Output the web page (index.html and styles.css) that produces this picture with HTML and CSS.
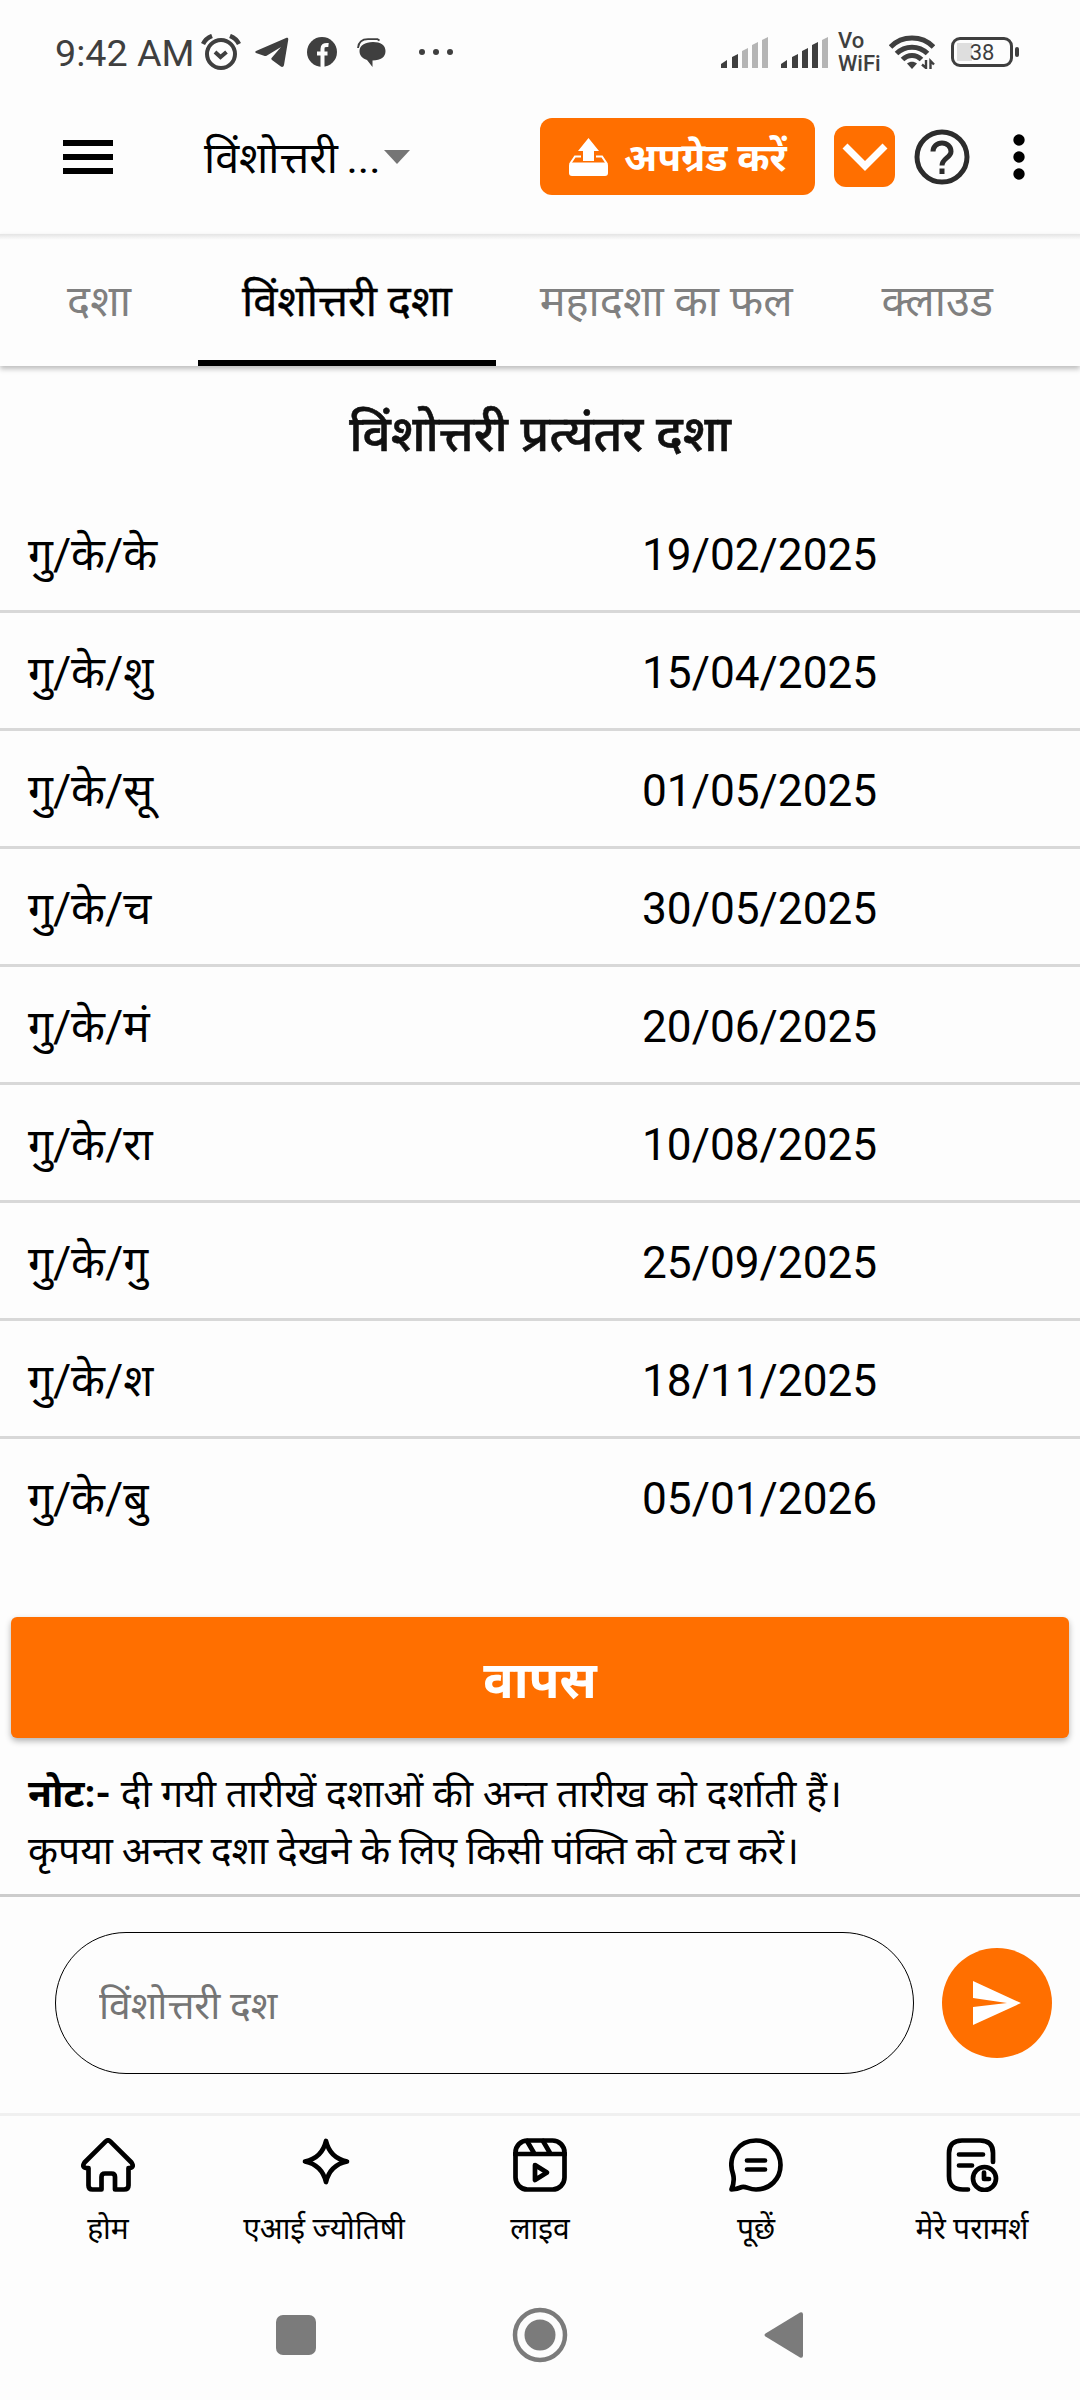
FILE: index.html
```
<!DOCTYPE html>
<html lang="hi">
<head>
    <meta charset="UTF-8">
    <meta name="viewport" content="width=device-width, initial-scale=1.0">
    <title>विंशोत्तरी दशा</title>
    <link rel="stylesheet" href="styles.css">
</head>
<body>
    <!-- Status bar -->
    <div class="status-bar">
        <span class="time">9:42 AM</span>
        <svg class="alarm" width="40" height="36" viewBox="0 0 40 36" fill="none" stroke="#3f3f3f" stroke-width="4">
            <circle cx="20" cy="20" r="14"/>
            <path d="M2 10C4 6 7 3.500 11 2M38 10C36 6 33 3.500 29 2" stroke-width="4.500"/>
            <path d="M14 18l5.500 5 6-5"/>
        </svg>
        <svg class="telegram" width="34" height="30" viewBox="0 0 34 30" fill="#3f3f3f">
            <path d="M1 14L31 1c1.500-.5 2.500 0 2.200 2L29 28c-.4 2-2 2.400-3.500 1.300L17 23c-1-.8-1-1.600 0-2.600L26 10 12 18.500c-1 .6-2 .7-3 .3L1 16c-1-.6-1-1.400 0-2z"/>
        </svg>
        <svg class="facebook" width="30" height="30" viewBox="0 0 30 30">
            <circle cx="15" cy="15" r="15" fill="#3f3f3f"/>
            <path d="M15.500 30V12c0-3 1.500-4.500 6-4M10 16.500h10.500" fill="none" stroke="#fdfdfd" stroke-width="4"/>
        </svg>
        <svg class="chat" width="29" height="29" viewBox="0 0 29 29" fill="#3f3f3f">
            <path d="M16 4C23.500 4 28.500 7 28.500 13S24 22.500 15.500 22.500V29L10 22C5 20.500 2.500 17 2.500 13C2.500 7.500 8 4 16 4z"/>
            <path d="M1 10C1.500 4.500 5 1.200 11 1.200h9.500l2 1.300" fill="none" stroke="#3f3f3f" stroke-width="1.800"/>
        </svg>
        <svg class="more" width="34" height="8" viewBox="0 0 34 8" fill="#3f3f3f">
            <circle cx="3" cy="4" r="3"/><circle cx="17" cy="4" r="3"/><circle cx="31" cy="4" r="3"/>
        </svg>
        <div class="status-right">
            <svg width="48" height="31" viewBox="0 0 48 31">
                <path d="M0 31v-4l6-4v8zM11 31V20l6-3v14z" fill="#3f3f3f"/>
                <path d="M21 31V14l6-3v20zM31 31V8l6-3v26zM41 31V3l6-3v31z" fill="#b5b5b5"/>
            </svg>
            <svg width="48" height="31" viewBox="0 0 48 31">
                <path d="M0 31v-4l6-4v8zM11 31V20l6-3v14zM21 31V14l6-3v20zM31 31V8l6-3v26z" fill="#3f3f3f"/>
                <path d="M41 31V3l6-3v31z" fill="#b5b5b5"/>
            </svg>
            <div class="vowifi"><span>Vo</span><span>WiFi</span></div>
            <svg class="wifi" width="46" height="34" viewBox="0 0 46 34" fill="none" stroke="#3f3f3f" stroke-width="5">
                <path d="M1.500 12C13 0 33 0 44.500 12M7.500 18.500C16 10 30 10 38.500 18.500M13.500 24.500C19 19 27 19 32.500 24.500"/>
                <path d="M23 34l-5-5.500c3-2.500 7-2.500 10 0z" fill="#3f3f3f" stroke="none"/>
                <path d="M37 25v8l-4-3.500M41.500 34v-8l3.500 3.500" stroke-width="2.400"/>
            </svg>
            <div class="battery"><span>38</span></div>
        </div>
    </div>

    <!-- App bar -->
    <div class="app-bar">
        <div class="hamburger"><i></i><i></i><i></i></div>
        <span class="app-title">विंशोत्तरी ...</span>
        <span class="caret"></span>
        <div class="app-actions">
            <div class="upgrade">
                <svg width="39" height="38" viewBox="0 0 39 38" fill="#fff">
                    <path d="M19.500 0L30 13h-5v10H14V13H9z"/>
                    <path d="M1 26L6 18.500h6M38 26l-5-7.500h-6" fill="none" stroke="#fff" stroke-width="2"/>
                    <rect x="0" y="24.500" width="39" height="13.500" rx="3"/>
                </svg>
                <span>अपग्रेड करें</span>
            </div>
            <div class="expand">
                <svg width="46" height="28" viewBox="0 0 46 28" fill="none" stroke="#fff" stroke-width="7">
                    <path d="M3 3L23 23 43 3"/>
                </svg>
            </div>
            <svg class="help" width="56" height="56" viewBox="0 0 56 56" fill="none" stroke="#2c2c2c" stroke-width="5">
                <circle cx="28" cy="28" r="25"/>
                <path d="M19 22.500c0-5 4-8.500 9-8.500s9 3.500 9 8.500c0 6-9 7-9 14"/>
                <path d="M28 39.500v5.500"/>
            </svg>
            <svg width="12" height="46" viewBox="0 0 12 46">
                <circle cx="6" cy="6" r="5.700"/><circle cx="6" cy="23" r="5.700"/><circle cx="6" cy="40" r="5.700"/>
            </svg>
        </div>
    </div>

    <!-- Tabs -->
    <div class="tabs">
        <div class="tab first">दशा</div>
        <div class="tab active">विंशोत्तरी दशा</div>
        <div class="tab">महादशा का फल</div>
        <div class="tab">क्लाउड</div>
    </div>

    <div class="content">
        <h1>विंशोत्तरी प्रत्यंतर दशा</h1>
        <div class="row"><span>गु/के/के</span><span>19/02/2025</span></div>
        <div class="row"><span>गु/के/शु</span><span>15/04/2025</span></div>
        <div class="row"><span>गु/के/सू</span><span>01/05/2025</span></div>
        <div class="row"><span>गु/के/च</span><span>30/05/2025</span></div>
        <div class="row"><span>गु/के/मं</span><span>20/06/2025</span></div>
        <div class="row"><span>गु/के/रा</span><span>10/08/2025</span></div>
        <div class="row"><span>गु/के/गु</span><span>25/09/2025</span></div>
        <div class="row"><span>गु/के/श</span><span>18/11/2025</span></div>
        <div class="row"><span>गु/के/बु</span><span>05/01/2026</span></div>
        <button class="back-btn">वापस</button>
        <p class="note"><b>नोट:-</b> दी गयी तारीखें दशाओं की अन्त तारीख को दर्शाती हैं।</p>
        <p class="note hint">कृपया अन्तर दशा देखने के लिए किसी पंक्ति को टच करें।</p>
    </div>

    <!-- Question box -->
    <div class="ask-bar">
        <input type="text" class="ask-input" placeholder="विंशोत्तरी दश">
        <div class="send">
            <svg width="48" height="44" viewBox="0 0 48 44">
                <path d="M0 0L48 22 0 44V26L34 22 0 17z" fill="#fff"/>
            </svg>
        </div>
    </div>

    <!-- Bottom navigation -->
    <div class="bottom-nav">
        <div class="nav-item">
            <svg width="54" height="54" viewBox="0 0 54 54">
                <path d="M25 3.200Q27 1.500 29 3.200L50.500 24.500Q53.500 29 49 30H47.500V47.500Q47.500 51.500 43 51.500H34V39Q34 35.500 30.500 35.500H24Q20.500 35.500 20.500 39V51.500H11.500Q7.500 51.500 7.500 47.500V30H5Q.5 29 3.500 24.500Z"/>
            </svg>
            <span>होम</span>
        </div>
        <div class="nav-item">
            <svg width="54" height="54" viewBox="0 0 54 54">
                <path d="M29 3Q33 20 50 23.500Q33 27 29 44Q25 27 8 23.500Q25 20 29 3Z"/>
            </svg>
            <span>एआई ज्योतिषी</span>
        </div>
        <div class="nav-item">
            <svg width="54" height="54" viewBox="0 0 54 54">
                <rect x="2.500" y="2.500" width="49" height="49" rx="12"/>
                <path d="M2 16H52M14 3L21 15M30 3L37 15"/>
                <path d="M22 27L34 34.500 22 42Z"/>
            </svg>
            <span>लाइव</span>
        </div>
        <div class="nav-item">
            <svg width="54" height="54" viewBox="0 0 54 54">
                <path d="M2.500 51.500Q6 43 4 36C-2 18 10 2.500 27 2.500C41 2.500 51.500 13 51.500 27S41 51.500 27 51.500C20 51.500 17 48 13 49Q7 51.500 2.500 51.500Z"/>
                <path d="M18 22.500H36M18 31.500H36"/>
            </svg>
            <span>पूछें</span>
        </div>
        <div class="nav-item">
            <svg width="54" height="54" viewBox="0 0 54 54">
                <path d="M23 51.500H18Q4 51.500 4 38V15Q4 2.500 17 2.500H35Q48 2.500 48 15V24M14 16.500H38M14 27.500H27"/>
                <circle cx="39.500" cy="40.500" r="11.500"/>
                <path d="M39 34.500V41H44"/>
            </svg>
            <span>मेरे परामर्श</span>
        </div>
    </div>

    <!-- System navigation -->
    <div class="system-nav">
        <svg width="56" height="56" viewBox="0 0 56 56"><rect x="8" y="8" width="40" height="40" rx="7"/></svg>
        <svg width="56" height="56" viewBox="0 0 56 56">
            <circle cx="28" cy="28" r="25" fill="none" stroke="#7b7b7b" stroke-width="4.500"/>
            <circle cx="28" cy="28" r="15.500"/>
        </svg>
        <svg width="56" height="56" viewBox="0 0 56 56"><path d="M9.500 26.500L44 5.500Q47 4.500 47 7.500V48.500Q47 51.500 44 50.500L9.500 29.500Q7.500 28 9.500 26.500Z"/></svg>
    </div>
</body>
</html>
```

FILE: styles.css
```
* {
    box-sizing: border-box;
}

body {
    margin: 0;
    height: 2400px;
    background-color: #fdfdfd;
    color: #000;
    font-family: Roboto, "Noto Sans", sans-serif;
    display: flex;
    flex-direction: column;
    overflow: hidden;
}

svg {
    display: block;
    flex-shrink: 0;
}

/* Status bar */
.status-bar {
    height: 80px;
    padding: 24px 67px 0 55px;
    display: flex;
    align-items: center;
    color: #3f3f3f;
}

.time {
    width: 140px;
    font-size: 37.700px;
    line-height: 56px;
    white-space: nowrap;
    padding-top: 2px;
}

.alarm {
    margin-left: 6px;
}

.telegram {
    margin-left: 14px;
}

.facebook {
    margin-left: 18px;
}

.chat {
    margin-left: 20px;
}

.more {
    margin-left: 33px;
}

.status-right {
    margin-left: auto;
    display: flex;
    align-items: center;
    gap: 12px;
}

.vowifi {
    width: 43px;
    margin-left: -3px;
    display: flex;
    flex-direction: column;
    gap: 1px;
    font-size: 22px;
    font-weight: 500;
    line-height: 22px;
}

.wifi {
    margin-left: -4px;
}

.battery {
    position: relative;
    width: 62px;
    height: 30px;
    margin-left: 4px;
    border: 3px solid #3f3f3f;
    border-radius: 9px;
    background: linear-gradient(#dedede, #dedede) 3px 3px / 15px 18px no-repeat;
    font-size: 22px;
    line-height: 25px;
    text-align: center;
}

.battery::after {
    content: "";
    position: absolute;
    right: -9px;
    top: 7px;
    width: 4px;
    height: 10px;
    border-radius: 2px;
    background-color: #3f3f3f;
}

/* App bar */
.app-bar {
    height: 154px;
    padding: 0 55px 0 63px;
    display: flex;
    align-items: center;
}

.hamburger {
    width: 50px;
    display: flex;
    flex-direction: column;
    gap: 8px;
}

.hamburger i {
    height: 6px;
    background-color: #000;
}

.app-title {
    margin-left: 91px;
    padding-top: 2px;
    font-size: 43px;
    line-height: 60px;
    word-spacing: -2px;
    white-space: nowrap;
}

.caret {
    margin-left: 3px;
    border: 13px solid transparent;
    border-top: 14px solid #757575;
    border-bottom: none;
}

.app-actions {
    margin-left: auto;
    padding-bottom: 1px;
    display: flex;
    align-items: center;
}

.upgrade {
    width: 275px;
    height: 77px;
    margin-right: 19px;
    padding-left: 29px;
    display: flex;
    align-items: center;
    gap: 16px;
    border-radius: 12px;
    background-color: #ff6f00;
    color: #fff;
    font-size: 39px;
    font-weight: 700;
    line-height: 60px;
    white-space: nowrap;
}

.upgrade span {
    padding-top: 3px;
}

.expand {
    width: 61px;
    height: 61px;
    display: flex;
    align-items: center;
    justify-content: center;
    border-radius: 12px;
    background-color: #ff6f00;
}

.help {
    margin: 0 43px 0 19px;
}

/* Tabs */
.tabs {
    height: 132px;
    display: flex;
    background: linear-gradient(#e4e4e4, #fdfdfd 6px);
    box-shadow: 0 3px 5px rgba(0, 0, 0, 0.25);
    font-size: 43.400px;
    line-height: 60px;
}

.tab {
    padding: 38px 44px 0;
    border-bottom: 6px solid transparent;
    color: #808080;
    white-space: nowrap;
}

.tab.first {
    width: 198px;
    padding-left: 0;
    padding-right: 0;
    text-align: center;
}

.tab.active {
    border-bottom-color: #000;
    color: #000;
    -webkit-text-stroke: 0.4px #000;
}

.tab:last-child {
    padding-left: 45px;
}

/* Dasha list */
.content {
    height: 1531px;
    border-bottom: 3px solid #ccc;
}

h1 {
    margin: 0;
    height: 129px;
    padding-top: 7px;
    font-family: "Noto Sans", sans-serif;
    font-size: 49.500px;
    font-weight: 500;
    line-height: 118px;
    text-align: center;
    color: #111;
    -webkit-text-stroke: 0.6px #111;
}

.row {
    height: 118px;
    padding: 4px 0 0 28px;
    display: grid;
    grid-template-columns: 614px 1fr;
    border-bottom: 3px solid #d8d8d8;
    font-size: 44.200px;
    line-height: 112px;
}

.row:nth-of-type(9) {
    border-bottom-color: transparent;
}

.back-btn {
    display: block;
    width: 1058px;
    height: 121px;
    margin: 60px 11px 28px;
    padding: 5px 0 0;
    border: none;
    border-radius: 6px;
    background-color: #ff6f00;
    box-shadow: 0 3px 6px rgba(0, 0, 0, 0.3);
    color: #fff;
    font-family: inherit;
    font-size: 50.500px;
    font-weight: 700;
    line-height: 113px;
}

.note {
    margin: 0;
    padding-left: 28px;
    font-size: 39.100px;
    line-height: 57px;
    white-space: nowrap;
}

.note.hint {
    word-spacing: -0.900px;
}

/* Question box */
.ask-bar {
    height: 216px;
    padding: 0 28px 4px 55px;
    display: flex;
    align-items: center;
    justify-content: space-between;
}

.ask-input {
    width: 859px;
    height: 142px;
    padding: 5px 43px 0;
    border: 1px solid #000;
    border-radius: 71px;
    background: none;
    font-family: inherit;
    font-size: 39px;
}

.ask-input::placeholder {
    color: #757575;
}

.send {
    width: 110px;
    height: 110px;
    display: flex;
    align-items: center;
    justify-content: center;
    border-radius: 50%;
    background-color: #ff6f00;
}

/* Bottom navigation */
.bottom-nav {
    height: 157px;
    padding-top: 22px;
    display: flex;
    border-top: 3px solid #f0f0f0;
}

.nav-item {
    flex: 1;
    display: flex;
    flex-direction: column;
    align-items: center;
    gap: 17px;
    font-size: 30px;
    line-height: 40px;
    white-space: nowrap;
}

.nav-item svg {
    fill: none;
    stroke: #000;
    stroke-width: 4.700;
    stroke-linejoin: round;
    stroke-linecap: round;
}

.system-nav {
    height: 130px;
    display: flex;
    align-items: center;
    justify-content: center;
    gap: 188px;
}

.system-nav svg {
    fill: #7b7b7b;
}
```
